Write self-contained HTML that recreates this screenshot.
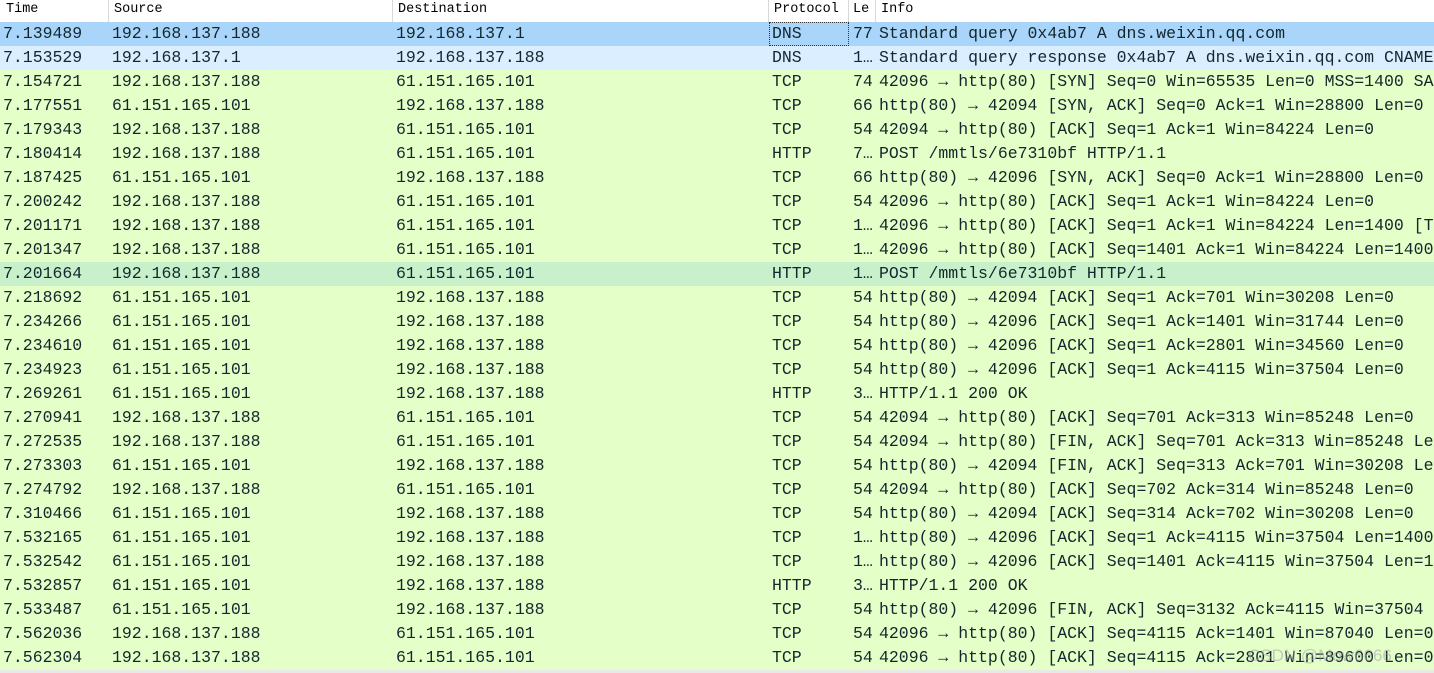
<!DOCTYPE html>
<html><head><meta charset="utf-8"><style>
body{margin:0;width:1434px;height:673px;overflow:hidden;background:#fff;position:relative;font-family:"Liberation Mono","DejaVu Sans Mono",monospace;}
.h{position:absolute;top:0;left:0;width:1434px;height:22px;background:#fff;border-bottom:1px solid #e0e0e0;font-size:13.5px;color:#000;}
.h span{position:absolute;top:2px;}
.h i{position:absolute;top:0;height:22px;border-left:1px solid #d8d8d8;}
.r{position:absolute;left:0;width:1434px;height:24px;background:#e4ffc7;font-size:16.5px;color:#12272e;line-height:24px;white-space:nowrap;overflow:hidden;}
.r span{position:absolute;top:0;}
.a{left:3px}.b{left:112px}.c{left:396px}.d{left:772px}.e{left:853px}.f{left:879px}
.sel{background:#a9d5fb}.dns{background:#daeeff}.hl{background:#c8f0cb}
.foot{position:absolute;top:670px;left:0;width:1434px;height:3px;background:#e8e8e8;}
.wm{position:absolute;left:1248px;top:646px;font-family:"Liberation Sans",sans-serif;font-size:17px;color:rgba(160,160,160,0.55);}
</style></head><body>
<div class="h"><span style="left:6px">Time</span><i style="left:108px"></i><span style="left:114px">Source</span><i style="left:392px"></i><span style="left:398px">Destination</span><i style="left:768px"></i><span style="left:774px">Protocol</span><i style="left:848px"></i><span style="left:853px">Le</span><i style="left:875px"></i><span style="left:881px">Info</span></div>
<div class="r sel" style="top:22px"><span class="a">7.139489</span><span class="b">192.168.137.188</span><span class="c">192.168.137.1</span><span class="d" style="outline:1px dotted #333;left:770px;width:76px;height:22px;top:1px;line-height:22px;padding-left:2px">DNS</span><span class="e">77</span><span class="f">Standard query 0x4ab7 A dns.weixin.qq.com</span></div>
<div class="r dns" style="top:46px"><span class="a">7.153529</span><span class="b">192.168.137.1</span><span class="c">192.168.137.188</span><span class="d">DNS</span><span class="e">1…</span><span class="f">Standard query response 0x4ab7 A dns.weixin.qq.com CNAME</span></div>
<div class="r" style="top:70px"><span class="a">7.154721</span><span class="b">192.168.137.188</span><span class="c">61.151.165.101</span><span class="d">TCP</span><span class="e">74</span><span class="f">42096 → http(80) [SYN] Seq=0 Win=65535 Len=0 MSS=1400 SACK</span></div>
<div class="r" style="top:94px"><span class="a">7.177551</span><span class="b">61.151.165.101</span><span class="c">192.168.137.188</span><span class="d">TCP</span><span class="e">66</span><span class="f">http(80) → 42094 [SYN, ACK] Seq=0 Ack=1 Win=28800 Len=0</span></div>
<div class="r" style="top:118px"><span class="a">7.179343</span><span class="b">192.168.137.188</span><span class="c">61.151.165.101</span><span class="d">TCP</span><span class="e">54</span><span class="f">42094 → http(80) [ACK] Seq=1 Ack=1 Win=84224 Len=0</span></div>
<div class="r" style="top:142px"><span class="a">7.180414</span><span class="b">192.168.137.188</span><span class="c">61.151.165.101</span><span class="d">HTTP</span><span class="e">7…</span><span class="f">POST /mmtls/6e7310bf HTTP/1.1</span></div>
<div class="r" style="top:166px"><span class="a">7.187425</span><span class="b">61.151.165.101</span><span class="c">192.168.137.188</span><span class="d">TCP</span><span class="e">66</span><span class="f">http(80) → 42096 [SYN, ACK] Seq=0 Ack=1 Win=28800 Len=0</span></div>
<div class="r" style="top:190px"><span class="a">7.200242</span><span class="b">192.168.137.188</span><span class="c">61.151.165.101</span><span class="d">TCP</span><span class="e">54</span><span class="f">42096 → http(80) [ACK] Seq=1 Ack=1 Win=84224 Len=0</span></div>
<div class="r" style="top:214px"><span class="a">7.201171</span><span class="b">192.168.137.188</span><span class="c">61.151.165.101</span><span class="d">TCP</span><span class="e">1…</span><span class="f">42096 → http(80) [ACK] Seq=1 Ack=1 Win=84224 Len=1400 [TCP</span></div>
<div class="r" style="top:238px"><span class="a">7.201347</span><span class="b">192.168.137.188</span><span class="c">61.151.165.101</span><span class="d">TCP</span><span class="e">1…</span><span class="f">42096 → http(80) [ACK] Seq=1401 Ack=1 Win=84224 Len=1400</span></div>
<div class="r hl" style="top:262px"><span class="a">7.201664</span><span class="b">192.168.137.188</span><span class="c">61.151.165.101</span><span class="d">HTTP</span><span class="e">1…</span><span class="f">POST /mmtls/6e7310bf HTTP/1.1</span></div>
<div class="r" style="top:286px"><span class="a">7.218692</span><span class="b">61.151.165.101</span><span class="c">192.168.137.188</span><span class="d">TCP</span><span class="e">54</span><span class="f">http(80) → 42094 [ACK] Seq=1 Ack=701 Win=30208 Len=0</span></div>
<div class="r" style="top:310px"><span class="a">7.234266</span><span class="b">61.151.165.101</span><span class="c">192.168.137.188</span><span class="d">TCP</span><span class="e">54</span><span class="f">http(80) → 42096 [ACK] Seq=1 Ack=1401 Win=31744 Len=0</span></div>
<div class="r" style="top:334px"><span class="a">7.234610</span><span class="b">61.151.165.101</span><span class="c">192.168.137.188</span><span class="d">TCP</span><span class="e">54</span><span class="f">http(80) → 42096 [ACK] Seq=1 Ack=2801 Win=34560 Len=0</span></div>
<div class="r" style="top:358px"><span class="a">7.234923</span><span class="b">61.151.165.101</span><span class="c">192.168.137.188</span><span class="d">TCP</span><span class="e">54</span><span class="f">http(80) → 42096 [ACK] Seq=1 Ack=4115 Win=37504 Len=0</span></div>
<div class="r" style="top:382px"><span class="a">7.269261</span><span class="b">61.151.165.101</span><span class="c">192.168.137.188</span><span class="d">HTTP</span><span class="e">3…</span><span class="f">HTTP/1.1 200 OK</span></div>
<div class="r" style="top:406px"><span class="a">7.270941</span><span class="b">192.168.137.188</span><span class="c">61.151.165.101</span><span class="d">TCP</span><span class="e">54</span><span class="f">42094 → http(80) [ACK] Seq=701 Ack=313 Win=85248 Len=0</span></div>
<div class="r" style="top:430px"><span class="a">7.272535</span><span class="b">192.168.137.188</span><span class="c">61.151.165.101</span><span class="d">TCP</span><span class="e">54</span><span class="f">42094 → http(80) [FIN, ACK] Seq=701 Ack=313 Win=85248 Len=0</span></div>
<div class="r" style="top:454px"><span class="a">7.273303</span><span class="b">61.151.165.101</span><span class="c">192.168.137.188</span><span class="d">TCP</span><span class="e">54</span><span class="f">http(80) → 42094 [FIN, ACK] Seq=313 Ack=701 Win=30208 Len=0</span></div>
<div class="r" style="top:478px"><span class="a">7.274792</span><span class="b">192.168.137.188</span><span class="c">61.151.165.101</span><span class="d">TCP</span><span class="e">54</span><span class="f">42094 → http(80) [ACK] Seq=702 Ack=314 Win=85248 Len=0</span></div>
<div class="r" style="top:502px"><span class="a">7.310466</span><span class="b">61.151.165.101</span><span class="c">192.168.137.188</span><span class="d">TCP</span><span class="e">54</span><span class="f">http(80) → 42094 [ACK] Seq=314 Ack=702 Win=30208 Len=0</span></div>
<div class="r" style="top:526px"><span class="a">7.532165</span><span class="b">61.151.165.101</span><span class="c">192.168.137.188</span><span class="d">TCP</span><span class="e">1…</span><span class="f">http(80) → 42096 [ACK] Seq=1 Ack=4115 Win=37504 Len=1400</span></div>
<div class="r" style="top:550px"><span class="a">7.532542</span><span class="b">61.151.165.101</span><span class="c">192.168.137.188</span><span class="d">TCP</span><span class="e">1…</span><span class="f">http(80) → 42096 [ACK] Seq=1401 Ack=4115 Win=37504 Len=1</span></div>
<div class="r" style="top:574px"><span class="a">7.532857</span><span class="b">61.151.165.101</span><span class="c">192.168.137.188</span><span class="d">HTTP</span><span class="e">3…</span><span class="f">HTTP/1.1 200 OK</span></div>
<div class="r" style="top:598px"><span class="a">7.533487</span><span class="b">61.151.165.101</span><span class="c">192.168.137.188</span><span class="d">TCP</span><span class="e">54</span><span class="f">http(80) → 42096 [FIN, ACK] Seq=3132 Ack=4115 Win=37504 Len=0</span></div>
<div class="r" style="top:622px"><span class="a">7.562036</span><span class="b">192.168.137.188</span><span class="c">61.151.165.101</span><span class="d">TCP</span><span class="e">54</span><span class="f">42096 → http(80) [ACK] Seq=4115 Ack=1401 Win=87040 Len=0</span></div>
<div class="r" style="top:646px"><span class="a">7.562304</span><span class="b">192.168.137.188</span><span class="c">61.151.165.101</span><span class="d">TCP</span><span class="e">54</span><span class="f">42096 → http(80) [ACK] Seq=4115 Ack=2801 Win=89600 Len=0</span></div>
<div class="wm">CSDN @Mow6666</div>
<div class="foot"></div>
</body></html>
